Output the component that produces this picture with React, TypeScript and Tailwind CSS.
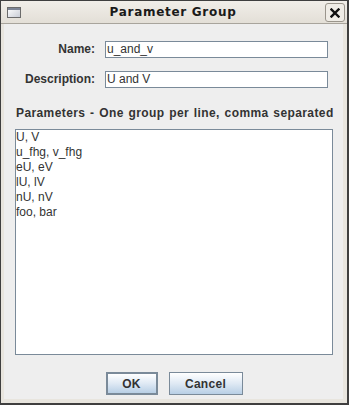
import React from "react";

const params = ["U, V", "u_fhg, v_fhg", "eU, eV", "lU, lV", "nU, nV", "foo, bar"];

function WindowIcon() {
  return (
    <div className="h-[11px] w-[14px] border border-[#6b6b6b] bg-gradient-to-br from-[#ffffff] to-[#c9cdd6]">
      <div className="h-[2px] w-full bg-[#7d8596]" />
    </div>
  );
}

function CloseButton() {
  return (
    <div className="flex h-[19px] w-[20px] items-center justify-center rounded-[3px] border border-[#9a958c] bg-[#efece6]">
      <svg width="10" height="10" viewBox="0 0 10 10" aria-hidden="true">
        <path d="M1.5 1.5 L8.5 8.5 M8.5 1.5 L1.5 8.5" stroke="#111" strokeWidth="2.4" strokeLinecap="square" />
      </svg>
    </div>
  );
}

function Field({ label, value }: { label: string; value: string }) {
  return (
    <>
      <label className="text-right text-[12px] font-bold text-[#333333]">{label}</label>
      <input
        readOnly
        defaultValue={value}
        className="h-[17px] w-full border border-[#7a8a99] bg-white px-[1px] pt-0 pb-[1px] text-[12px] leading-[15px] text-[#333333] outline-none"
      />
    </>
  );
}

export default function App() {
  const btn =
    "flex h-[23px] items-center justify-center bg-gradient-to-b from-[#ffffff] via-[#dfe9f4] to-[#b8cfe5] text-[12px] font-bold tracking-[0.3px] text-[#333333]";

  return (
    <div
      className="flex h-[405px] w-[349px] flex-col border-t border-l border-r-2 border-b-2 border-[#3f3f3f] bg-[#e8e5de]"
      style={{ fontFamily: '"Liberation Sans", Arial, sans-serif' }}
    >
      {/* Title bar */}
      <div className="relative flex h-[23px] shrink-0 items-center border-b border-[#a8a49c] bg-gradient-to-b from-[#f1eee9] to-[#e3dfd7]">
        <div className="pl-[6px] pt-[1px]">
          <WindowIcon />
        </div>
        <div
          className="flex-1 text-center text-[12px] font-bold tracking-[0.7px] text-[#1a1a1a]"
          style={{ fontFamily: '"DejaVu Sans", sans-serif' }}
        >
          Parameter Group
        </div>
        <div className="pr-[2px] pt-[1px]">
          <CloseButton />
        </div>
      </div>

      {/* Body */}
      <div className="flex flex-1 flex-col pb-[4px] pl-[3px] pr-[4px]">
        <div className="flex flex-1 flex-col bg-[#eeeeee]">
          <div className="grid grid-cols-[91px_1fr] items-center gap-x-[10px] gap-y-[12px] pr-[15px] pt-[16px]">
            <Field label="Name:" value="u_and_v" />
            <Field label="Description:" value="U and V" />
          </div>

          <div className="mt-[18px] pl-[12px] text-[12px] font-bold leading-[14px] tracking-[0.4px] text-[#333333] [word-spacing:1px]">
            Parameters - One group per line, comma separated
          </div>

          <textarea
            readOnly
            defaultValue={params.join("\n")}
            className="ml-[11px] mr-[10px] mt-[9px] h-[226px] resize-none overflow-hidden border border-[#7a8a99] bg-white p-0 text-[12px] leading-[15px] text-[#333333] outline-none"
          />

          <div className="mt-[17px] flex justify-center gap-[11px] pl-[1px]">
            <button className={`${btn} w-[52px] border-2 border-[#7a8a99]`}>OK</button>
            <button className={`${btn} w-[74px] border border-[#7a8a99]`}>Cancel</button>
          </div>
        </div>
      </div>
    </div>
  );
}
